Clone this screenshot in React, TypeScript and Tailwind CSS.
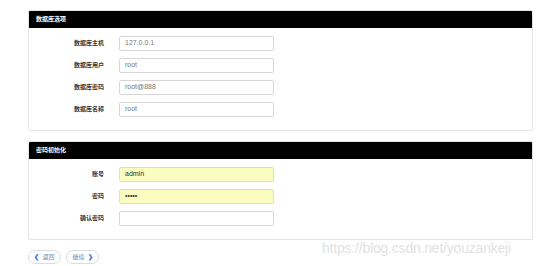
import type { ReactNode } from 'react';

type Field = {
  label: string;
  value: string;
  filled?: boolean;
};

const dbFields: Field[] = [
  { label: '数据库主机', value: '127.0.0.1' },
  { label: '数据库用户', value: 'root' },
  { label: '数据库密码', value: 'root@888' },
  { label: '数据库名称', value: 'root' }
];

const adminFields: Field[] = [
  { label: '账号', value: 'admin', filled: true },
  { label: '密码', value: '•••••', filled: true },
  { label: '确认密码', value: '' }
];

function Panel({ title, children }: { title: string; children: ReactNode }) {
  return (
    <div className="overflow-hidden rounded-[2px] border border-[#e3e3e3] bg-white">
      <div className="flex h-[17px] items-center bg-black px-[7px] text-[6px] font-bold text-white">
        {title}
      </div>
      <div className="flex flex-col gap-[7px] pb-[13px] pt-[8px]">{children}</div>
    </div>
  );
}

function FormRow({ field }: { field: Field }) {
  return (
    <div className="flex items-center">
      <label className="w-[75px] text-right text-[6px] font-bold text-[#333]">
        {field.label}
      </label>
      <div
        className={`ml-[15px] flex h-[15px] w-[155px] items-center rounded-[2px] border px-[5px] text-[7px] ${
          field.filled
            ? 'border-[#e2e2a8] bg-[#fafdbf] text-[#333]'
            : 'border-[#d6d6d6] bg-white text-[#777]'
        }`}
      >
        {field.value}
      </div>
    </div>
  );
}

export default function App() {
  return (
    <div
      className="relative h-[266px] w-[553px] bg-white pl-[28px] pr-[20px] pt-[10px]"
      style={{ fontFamily: '"Liberation Sans", "Noto Sans CJK SC", sans-serif' }}
    >
      <div className="flex flex-col gap-[10px]">
        <Panel title="数据库选项">
          {dbFields.map((field) => (
            <FormRow key={field.label} field={field} />
          ))}
        </Panel>

        <Panel title="密码初始化">
          {adminFields.map((field) => (
            <FormRow key={field.label} field={field} />
          ))}
        </Panel>

        <div className="flex gap-[5px]">
          <button
            type="button"
            className="flex h-[14px] w-[33px] items-center justify-center gap-[3px] rounded-full border border-[#dcdcdc] text-[6px] text-[#6a8fc4]"
          >
            <span className="text-[6px] font-bold text-[#2d6fcc]">❮</span>
            返回
          </button>
          <button
            type="button"
            className="flex h-[14px] w-[33px] items-center justify-center gap-[3px] rounded-full border border-[#dcdcdc] text-[6px] text-[#6a8fc4]"
          >
            继续
            <span className="text-[6px] font-bold text-[#2d6fcc]">❯</span>
          </button>
        </div>
      </div>

      {/* csdn watermark */}
      <div className="absolute left-[322px] top-[238px] text-[14px] tracking-[-0.2px] text-[#e2e2e2]">
        https://blog.csdn.net/youzankeji
      </div>
    </div>
  );
}
